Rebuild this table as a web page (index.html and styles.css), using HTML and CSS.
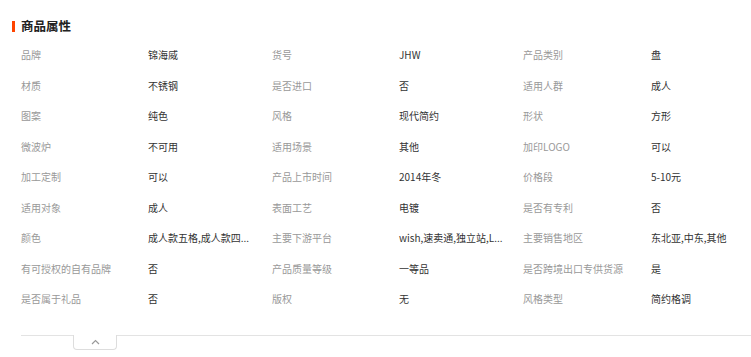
FILE: index.html
```html
<!DOCTYPE html>
<html lang="zh">
<head>
<meta charset="utf-8">
<title>商品属性</title>
<link rel="stylesheet" href="styles.css">
</head>
<body>
<section class="attrs">
  <h2 class="attrs-title"><span class="bar"></span>商品属性</h2>
  <div class="grid">
    <div class="k">品牌</div><div class="v">锦海威</div>
    <div class="k">货号</div><div class="v">JHW</div>
    <div class="k">产品类别</div><div class="v">盘</div>

    <div class="k">材质</div><div class="v">不锈钢</div>
    <div class="k">是否进口</div><div class="v">否</div>
    <div class="k">适用人群</div><div class="v">成人</div>

    <div class="k">图案</div><div class="v">纯色</div>
    <div class="k">风格</div><div class="v">现代简约</div>
    <div class="k">形状</div><div class="v">方形</div>

    <div class="k">微波炉</div><div class="v">不可用</div>
    <div class="k">适用场景</div><div class="v">其他</div>
    <div class="k">加印LOGO</div><div class="v">可以</div>

    <div class="k">加工定制</div><div class="v">可以</div>
    <div class="k">产品上市时间</div><div class="v">2014年冬</div>
    <div class="k">价格段</div><div class="v">5-10元</div>

    <div class="k">适用对象</div><div class="v">成人</div>
    <div class="k">表面工艺</div><div class="v">电镀</div>
    <div class="k">是否有专利</div><div class="v">否</div>

    <div class="k">颜色</div><div class="v">成人款五格,成人款四...</div>
    <div class="k">主要下游平台</div><div class="v">wish,速卖通,独立站,L...</div>
    <div class="k">主要销售地区</div><div class="v">东北亚,中东,其他</div>

    <div class="k">有可授权的自有品牌</div><div class="v">否</div>
    <div class="k">产品质量等级</div><div class="v">一等品</div>
    <div class="k">是否跨境出口专供货源</div><div class="v">是</div>

    <div class="k">是否属于礼品</div><div class="v">否</div>
    <div class="k">版权</div><div class="v">无</div>
    <div class="k">风格类型</div><div class="v">简约格调</div>
  </div>
  <div class="footer">
    <button class="toggle" type="button" aria-label="收起">
      <svg width="9" height="6" viewBox="0 0 9 6"><path d="M1 5 L4.5 1.5 L8 5" fill="none" stroke="#999" stroke-width="1.2"/></svg>
    </button>
  </div>
</section>
</body>
</html>
```

FILE: styles.css
```css
* { box-sizing: border-box; }
html, body { margin: 0; padding: 0; background: #fff; }
body {
  font-family: "Noto Sans CJK SC", "Noto Sans", sans-serif;
  color: #333;
}
.attrs { padding-top: 18px; }
.attrs-title {
  margin: 0;
  padding-left: 12px;
  display: flex;
  align-items: center;
  gap: 6px;
  font-size: 12.5px;
  font-weight: 700;
  color: #222;
  height: 16px;
  line-height: 16px;
}
.attrs-title .bar {
  display: block;
  width: 3px;
  height: 11px;
  background: #ff4400;
}
.grid {
  margin-top: 6px;
  padding-left: 21px;
  display: grid;
  grid-template-columns: 127px 124px 127px 124px 128px 1fr;
  grid-auto-rows: 30.5px;
  align-items: center;
  font-size: 10px;
  line-height: 14px;
}
.k { color: #999; white-space: nowrap; }
.v {
  color: #333;
  white-space: nowrap;
}
.footer {
  margin: 20px 0 0 21px;
  border-top: 1px solid #e3e3e3;
  padding-left: 52px;
}
.toggle {
  display: flex;
  align-items: center;
  justify-content: center;
  width: 44px;
  height: 15px;
  margin-top: -1px;
  padding: 0;
  background: #fff;
  border: 1px solid #ddd;
  border-top: none;
  border-radius: 0 0 4px 4px;
}
```
